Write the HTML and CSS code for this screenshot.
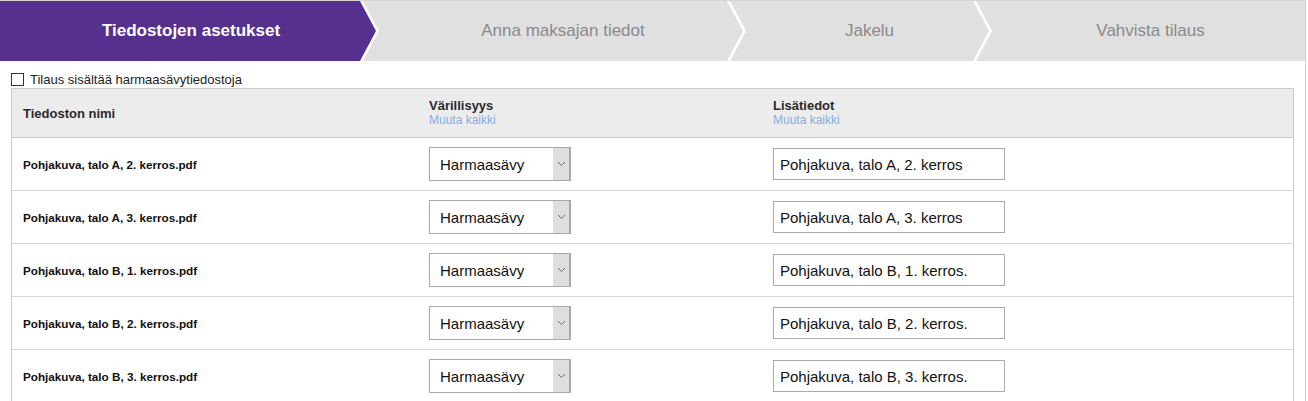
FILE: index.html
```html
<!DOCTYPE html>
<html lang="fi">
<head>
<meta charset="utf-8">
<title>Tiedostojen asetukset</title>
<link rel="stylesheet" href="styles.css">
</head>
<body>
<div class="wizard">
  <ol class="steps">
    <li class="step step-first step-active"><span>Tiedostojen asetukset</span></li>
    <li class="step step-2"><span>Anna maksajan tiedot</span></li>
    <li class="step step-3"><span>Jakelu</span></li>
    <li class="step step-last"><span>Vahvista tilaus</span></li>
  </ol>
  <div class="content">
    <label class="gray-option"><input type="checkbox" class="check"><span>Tilaus sisältää harmaasävytiedostoja</span></label>
    <div class="file-table">
      <div class="row head">
        <div class="cell"><span class="col-title">Tiedoston nimi</span></div>
        <div class="cell stack"><span class="col-title">Värillisyys</span><a class="change-all">Muuta kaikki</a></div>
        <div class="cell stack"><span class="col-title">Lisätiedot</span><a class="change-all">Muuta kaikki</a></div>
      </div>
      <div class="row">
        <div class="cell name">Pohjakuva, talo A, 2. kerros.pdf</div>
        <div class="cell"><div class="select"><span class="select-value">Harmaasävy</span><span class="select-btn"><svg width="9" height="6" viewBox="0 0 9 6"><path d="M1 1l3.5 3.5L8 1" fill="none" stroke="#6f6f6f" stroke-width="1"/></svg></span></div></div>
        <div class="cell"><input class="text-input" type="text" value="Pohjakuva, talo A, 2. kerros"></div>
      </div>
      <div class="row">
        <div class="cell name">Pohjakuva, talo A, 3. kerros.pdf</div>
        <div class="cell"><div class="select"><span class="select-value">Harmaasävy</span><span class="select-btn"><svg width="9" height="6" viewBox="0 0 9 6"><path d="M1 1l3.5 3.5L8 1" fill="none" stroke="#6f6f6f" stroke-width="1"/></svg></span></div></div>
        <div class="cell"><input class="text-input" type="text" value="Pohjakuva, talo A, 3. kerros"></div>
      </div>
      <div class="row">
        <div class="cell name">Pohjakuva, talo B, 1. kerros.pdf</div>
        <div class="cell"><div class="select"><span class="select-value">Harmaasävy</span><span class="select-btn"><svg width="9" height="6" viewBox="0 0 9 6"><path d="M1 1l3.5 3.5L8 1" fill="none" stroke="#6f6f6f" stroke-width="1"/></svg></span></div></div>
        <div class="cell"><input class="text-input" type="text" value="Pohjakuva, talo B, 1. kerros."></div>
      </div>
      <div class="row">
        <div class="cell name">Pohjakuva, talo B, 2. kerros.pdf</div>
        <div class="cell"><div class="select"><span class="select-value">Harmaasävy</span><span class="select-btn"><svg width="9" height="6" viewBox="0 0 9 6"><path d="M1 1l3.5 3.5L8 1" fill="none" stroke="#6f6f6f" stroke-width="1"/></svg></span></div></div>
        <div class="cell"><input class="text-input" type="text" value="Pohjakuva, talo B, 2. kerros."></div>
      </div>
      <div class="row">
        <div class="cell name">Pohjakuva, talo B, 3. kerros.pdf</div>
        <div class="cell"><div class="select"><span class="select-value">Harmaasävy</span><span class="select-btn"><svg width="9" height="6" viewBox="0 0 9 6"><path d="M1 1l3.5 3.5L8 1" fill="none" stroke="#6f6f6f" stroke-width="1"/></svg></span></div></div>
        <div class="cell"><input class="text-input" type="text" value="Pohjakuva, talo B, 3. kerros."></div>
      </div>
    </div>
  </div>
</div>
</body>
</html>
```
FILE: styles.css
```css
html, body {
  margin: 0;
  padding: 0;
  background: #fff;
}
body {
  font-family: "Liberation Sans", Arial, sans-serif;
  color: #222;
}
.wizard {
  width: 1306px;
  box-sizing: border-box;
  border-top: 1px solid #d6d6d6;
  border-right: 1px solid #cfcfcf;
  height: 401px;
  overflow: hidden;
}
.steps {
  list-style: none;
  margin: 0;
  padding: 0;
  display: flex;
  height: 60px;
}
.step {
  height: 60px;
  display: flex;
  align-items: center;
  justify-content: center;
  background: #e0e0e0;
  color: #8a8a8a;
  font-size: 17px;
  box-sizing: border-box;
  flex: none;
}
.step-first {
  width: 376px;
  padding-left: 6px;
  clip-path: polygon(0 0, calc(100% - 16px) 0, 100% 50%, calc(100% - 16px) 100%, 0 100%);
}
.step-active {
  background: #55308f;
  color: #fff;
  font-weight: bold;
}
.step-2, .step-3 {
  padding-left: 20px;
  margin-left: -13px;
  clip-path: polygon(0 0, calc(100% - 16px) 0, 100% 50%, calc(100% - 16px) 100%, 0 100%, 16px 50%);
}
.step-2 { width: 380px; }
.step-3 { width: 259px; }
.step-last {
  flex: 1;
  padding-left: 20px;
  margin-left: -13px;
  clip-path: polygon(0 0, 100% 0, 100% 100%, 0 100%, 16px 50%);
}
.content {
  padding: 10px 0 0 11px;
}
.gray-option {
  display: flex;
  align-items: center;
  height: 16px;
  margin-bottom: 1px;
  font-size: 13px;
  color: #222;
}
.check {
  appearance: none;
  -webkit-appearance: none;
  margin: 0 6px 0 0;
  width: 13px;
  height: 13px;
  border: 1px solid #333;
  background: #fff;
  box-sizing: border-box;
}
.file-table {
  width: 1283px;
  box-sizing: border-box;
  border: 1px solid #cccccc;
  border-bottom: none;
}
.row {
  display: grid;
  grid-template-columns: 406px 344px 1fr;
  height: 53px;
  box-sizing: border-box;
  border-bottom: 1px solid #d2d7dc;
}
.row.head {
  height: 49px;
  background: #ececec;
  border-bottom: 1px solid #c9c9c9;
}
.cell {
  display: flex;
  align-items: center;
  padding-left: 11px;
}
.cell.stack {
  flex-direction: column;
  align-items: flex-start;
  justify-content: center;
  padding-bottom: 1px;
}
.col-title {
  font-size: 13px;
  font-weight: bold;
  color: #2a2a2a;
  line-height: 15px;
}
.change-all {
  font-size: 12px;
  color: #86ace2;
  line-height: 14px;
  cursor: pointer;
}
.name {
  font-size: 11.7px;
  font-weight: bold;
  color: #111;
}
.select {
  display: flex;
  width: 142px;
  height: 34px;
  box-sizing: border-box;
  border: 1px solid #a9a9a9;
  background: #fff;
}
.select-value {
  flex: 1;
  display: flex;
  align-items: center;
  padding-left: 10px;
  font-size: 15px;
  color: #111;
}
.select-btn {
  width: 16px;
  display: flex;
  align-items: center;
  justify-content: center;
  background: #dedede;
  border-right: 1px solid #a9a9a9;
}
.text-input {
  width: 232px;
  height: 32px;
  box-sizing: border-box;
  border: 1px solid #a9abb0;
  margin: 0;
  padding: 0 0 0 6px;
  font-family: "Liberation Sans", Arial, sans-serif;
  font-size: 15px;
  color: #111;
  background: #fff;
  outline: none;
}
```
